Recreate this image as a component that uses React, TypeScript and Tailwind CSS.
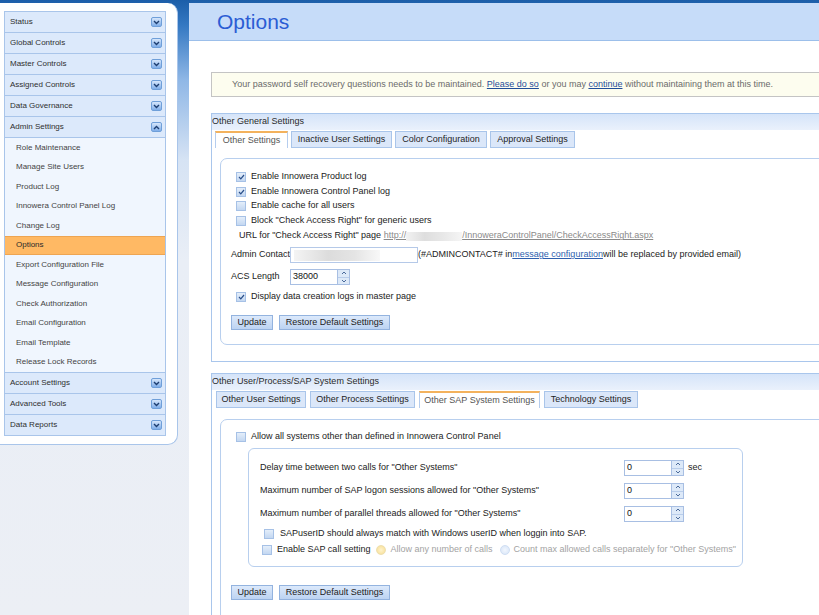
import React from "react";

function Chevron({ up }: { up?: boolean }) {
  return (
    <span className="w-[11px] h-[10px] rounded-[2px] border border-[#6f9fd9] bg-[linear-gradient(#d6e6fb,#80aee9)] flex items-center justify-center shrink-0">
      <svg width="7" height="5" viewBox="0 0 7 5">
        <path d={up ? "M1 4L3.5 1.5L6 4" : "M1 1L3.5 3.5L6 1"} stroke="#1d3d70" strokeWidth="1.4" fill="none" />
      </svg>
    </span>
  );
}

function Header({ label, up }: { label: string; up?: boolean }) {
  return (
    <div className="h-[21px] border-b border-[#a9c5ea] bg-[#dce9fb] flex items-center justify-between pl-[5px] pr-[3px] text-[#2f2f2f]">
      <span>{label}</span>
      <Chevron up={up} />
    </div>
  );
}

function Sidebar() {
  const top = ["Status", "Global Controls", "Master Controls", "Assigned Controls", "Data Governance"];
  const sub = [
    "Role Maintenance",
    "Manage Site Users",
    "Product Log",
    "Innowera Control Panel Log",
    "Change Log",
    "Options",
    "Export Configuration File",
    "Message Configuration",
    "Check Authorization",
    "Email Configuration",
    "Email Template",
    "Release Lock Records",
  ];
  const bottom = ["Account Settings", "Advanced Tools", "Data Reports"];
  return (
    <aside className="w-[178px] h-[442px] shrink-0 bg-white border-r border-b border-[#a9c5ea] rounded-tr-[10px] rounded-br-[10px] pl-[4px] pr-[11px] pt-[8px] text-[8px]">
      <div className="border-t border-l border-r border-[#a9c5ea]">
        {top.map((t) => (
          <Header key={t} label={t} />
        ))}
        <Header label="Admin Settings" up />
        <div className="bg-[#f0f6fe] border-b border-[#a9c5ea]">
          {sub.map((s) =>
            s === "Options" ? (
              <div key={s} className="h-[19.5px] flex items-center pl-[11px] bg-[#ffb964] border-y border-[#eea552] text-[#2a2a2a]">
                {s}
              </div>
            ) : (
              <div key={s} className="h-[19.5px] flex items-center pl-[11px] text-[#444]">
                {s}
              </div>
            )
          )}
        </div>
        {bottom.map((t) => (
          <Header key={t} label={t} />
        ))}
      </div>
    </aside>
  );
}

function Cb({ checked }: { checked?: boolean }) {
  return (
    <span className="w-[10px] h-[10px] border border-[#a6c1e6] bg-[linear-gradient(#e4eefa,#c3d7f1)] flex items-center justify-center shrink-0">
      {checked && (
        <svg width="7" height="6" viewBox="0 0 7 6">
          <path d="M1 3l1.8 1.8L6 1" stroke="#2a4f8a" strokeWidth="1.2" fill="none" />
        </svg>
      )}
    </span>
  );
}

function Spin({ value }: { value: string }) {
  return (
    <div className="w-[60px] h-[16px] flex border border-[#a8bfe3] bg-white shrink-0">
      <div className="flex-1 pl-[2px] flex items-center text-[#111]">{value}</div>
      <div className="w-[12px] border-l border-[#a8bfe3] bg-[#dde9f8] flex flex-col">
        <div className="flex-1 flex items-center justify-center border-b border-[#b9cdea]">
          <svg width="6" height="4" viewBox="0 0 6 4">
            <path d="M1 3L3 1L5 3" stroke="#4a6a9a" strokeWidth="1" fill="none" />
          </svg>
        </div>
        <div className="flex-1 flex items-center justify-center">
          <svg width="6" height="4" viewBox="0 0 6 4">
            <path d="M1 1L3 3L5 1" stroke="#4a6a9a" strokeWidth="1" fill="none" />
          </svg>
        </div>
      </div>
    </div>
  );
}

function Btn({ label, w }: { label: string; w: string }) {
  return (
    <div className={`${w} h-[15px] flex items-center justify-center border border-[#93b3df] bg-[linear-gradient(#dce9fb,#bcd3f2)] text-[#222]`}>
      {label}
    </div>
  );
}

function Tab({ label, active, w }: { label: string; active?: boolean; w: string }) {
  return active ? (
    <div className={`${w} h-[17px] flex items-center justify-center bg-white border-t-2 border-t-[#f3b25d] border-x border-x-[#b5cdee] text-[#555]`}>
      {label}
    </div>
  ) : (
    <div className={`${w} h-[17px] flex items-center justify-center bg-[#dbe7f9] border border-[#a9c5ea] text-[#1e1e1e]`}>
      {label}
    </div>
  );
}

function Row({ checked, children, className }: { checked?: boolean; children: React.ReactNode; className?: string }) {
  return (
    <div className={`flex items-center gap-[5px] ${className ?? ""}`}>
      <Cb checked={checked} />
      <span>{children}</span>
    </div>
  );
}

export default function App() {
  return (
    <div className="w-[819px] h-[615px] overflow-hidden flex pt-[3px] bg-[linear-gradient(180deg,#1c5ea9_0px,#3478c2_25px,#8fb7e6_80px,#d6e3f4_160px,#e9eef6_260px,#eceff5_100%)] font-['Liberation_Sans',Arial,sans-serif] text-[9px] whitespace-nowrap">
      <Sidebar />
      <main className="ml-[11px] flex-1 min-w-0 bg-white overflow-hidden flex flex-col">
        <div className="h-[38px] shrink-0 bg-[#c6dcf9] border-b border-[#9cbfea] pl-[28px] flex items-center text-[21px] text-[#2b5dd4]">
          Options
        </div>
        <div className="pl-[22px] pt-[31px] w-[760px] text-[#222]">
          <div className="h-[25px] bg-[#fdfdef] border border-[#c4c4c4] flex items-center pl-[20px] text-[#6b6b6b]">
            <span>
              Your password self recovery questions needs to be maintained.{" "}
              <span className="underline text-[#1f4e9a]">Please do so</span> or you may{" "}
              <span className="underline text-[#1f4e9a]">continue</span> without maintaining them at this time.
            </span>
          </div>

          {/* Section 1 */}
          <div className="mt-[16px] border-l border-t border-b border-[#a9c6ec]">
            <div className="h-[16px] bg-[linear-gradient(#d5e4f9,#eaf1fc)] flex items-center text-[#2a2a2a]">Other General Settings</div>
            <div className="flex pl-[3px] pt-[1px] gap-[3px]">
              <Tab label="Other Settings" active w="w-[73px]" />
              <Tab label="Inactive User Settings" w="w-[101px]" />
              <Tab label="Color Configuration" w="w-[92px]" />
              <Tab label="Approval Settings" w="w-[85px]" />
            </div>
            <div className="pl-[8px] pt-[10px] pb-[16px]">
              <div className="border border-[#b8cfee] rounded-[7px] pl-[10px] pt-[11px] pb-[14px]">
                <Row checked className="h-[14px] ml-[5px]">Enable Innowera Product log</Row>
                <Row checked className="h-[15px] ml-[5px]">Enable Innowera Control Panel log</Row>
                <Row className="h-[14px] ml-[5px]">Enable cache for all users</Row>
                <Row className="h-[15px] ml-[5px]">Block "Check Access Right" for generic users</Row>
                <div className="h-[16px] flex items-center pl-[8px]">
                  <span>URL for "Check Access Right" page&nbsp;</span>
                  <span className="underline text-[#8a8a8a] flex items-center">
                    http://
                    <span className="inline-block w-[56px] h-[9px] bg-[linear-gradient(90deg,#f2f2f2,#dedede,#e8e8e8,#f5f5f5)]" />
                    /InnoweraControlPanel/CheckAccessRight.aspx
                  </span>
                </div>
                <div className="h-[16px] mt-[3px] flex items-center">
                  <span className="w-[59px] shrink-0">Admin Contact</span>
                  <div className="w-[128px] h-[16px] shrink-0 border border-[#b5c9e8] bg-white flex items-center pl-[3px]">
                    <span className="w-[86px] h-[11px] bg-[linear-gradient(90deg,#f4f4f4,#dcdcdc_40%,#e4e4e4_70%,#f8f8f8)]" />
                  </div>
                  <span>(#ADMINCONTACT# in</span>
                  <span className="underline text-[#2f5fae]">message configuration</span>
                  <span>will be replaced by provided email)</span>
                </div>
                <div className="h-[16px] mt-[6px] flex items-center">
                  <span className="w-[59px] shrink-0">ACS Length</span>
                  <Spin value="38000" />
                </div>
                <Row checked className="h-[14px] mt-[5px] ml-[5px]">Display data creation logs in master page</Row>
                <div className="flex gap-[6px] mt-[11px]">
                  <Btn label="Update" w="w-[42px]" />
                  <Btn label="Restore Default Settings" w="w-[111px]" />
                </div>
              </div>
            </div>
          </div>

          {/* Section 2 */}
          <div className="mt-[11px] border-l border-t border-[#a9c6ec]">
            <div className="h-[16px] bg-[linear-gradient(#d5e4f9,#eaf1fc)] flex items-center text-[#2a2a2a]">Other User/Process/SAP System Settings</div>
            <div className="flex pl-[4px] pt-[1px] gap-[4px]">
              <Tab label="Other User Settings" w="w-[90px]" />
              <Tab label="Other Process Settings" w="w-[105px]" />
              <Tab label="Other SAP System Settings" active w="w-[121px]" />
              <Tab label="Technology Settings" w="w-[94px]" />
            </div>
            <div className="pl-[8px] pt-[11px]">
              <div className="border border-[#b8cfee] rounded-[7px] pl-[10px] pt-[10px] pb-[30px]">
                <Row className="h-[14px] ml-[5px]">Allow all systems other than defined in Innowera Control Panel</Row>
                <div className="ml-[17px] mt-[4px] w-[495px] border border-[#b8cfee] rounded-[6px] pl-[11px] pt-[11px] pb-[9px]">
                  <div className="h-[16px] flex items-center">
                    <span className="w-[364px] shrink-0">Delay time between two calls for "Other Systems"</span>
                    <Spin value="0" />
                    <span className="ml-[4px]">sec</span>
                  </div>
                  <div className="h-[16px] mt-[7px] flex items-center">
                    <span className="w-[364px] shrink-0">Maximum number of SAP logon sessions allowed for "Other Systems"</span>
                    <Spin value="0" />
                  </div>
                  <div className="h-[16px] mt-[7px] flex items-center">
                    <span className="w-[364px] shrink-0">Maximum number of parallel threads allowed for "Other Systems"</span>
                    <Spin value="0" />
                  </div>
                  <div className="h-[14px] mt-[5px] flex items-center gap-[6px] pl-[4px]">
                    <Cb />
                    <span>SAPuserID should always match with Windows userID when loggin into SAP.</span>
                  </div>
                  <div className="h-[14px] mt-[2px] flex items-center pl-[2px]">
                    <Cb />
                    <span className="ml-[5px]">Enable SAP call setting</span>
                    <span className="ml-[6px] w-[10px] h-[10px] rounded-full border border-[#eedfae] bg-[radial-gradient(circle,#fff3cc,#f6dd93)] shrink-0" />
                    <span className="ml-[4px] text-[#a3a3a3]">Allow any number of calls</span>
                    <span className="ml-[8px] w-[10px] h-[10px] rounded-full border border-[#cfdef3] bg-[radial-gradient(circle,#f2f7fe,#d6e4f7)] shrink-0" />
                    <span className="ml-[3px] text-[#a3a3a3]">Count max allowed calls separately for "Other Systems"</span>
                  </div>
                </div>
                <div className="flex gap-[6px] mt-[18px]">
                  <Btn label="Update" w="w-[42px]" />
                  <Btn label="Restore Default Settings" w="w-[111px]" />
                </div>
              </div>
            </div>
          </div>
        </div>
      </main>
    </div>
  );
}
